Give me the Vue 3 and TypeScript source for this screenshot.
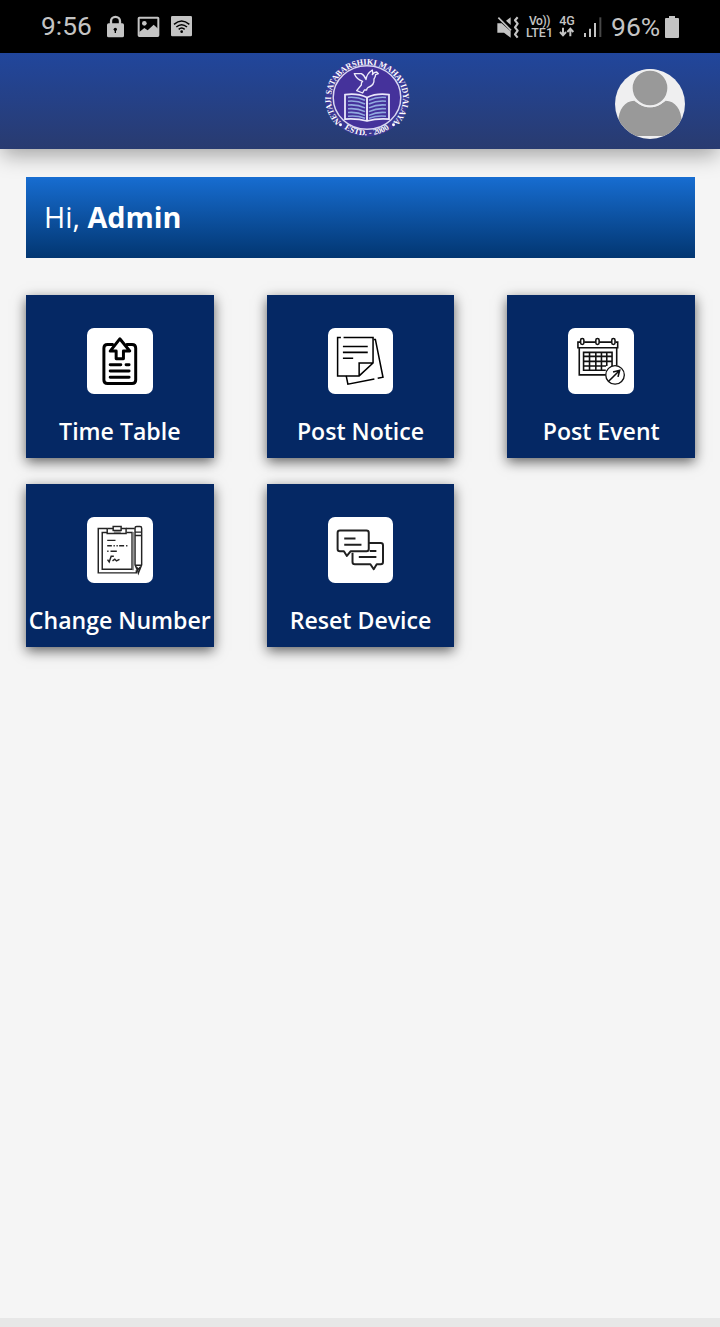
<script setup lang="ts">
interface Tile {
  label: string
  icon: 'timetable' | 'notice' | 'event' | 'number' | 'device'
  view: string
}

const tiles: Tile[] = [
  { label: 'Time Table', icon: 'timetable', view: '21 24 198 198' },
  { label: 'Post Notice', icon: 'notice', view: '24 24 198 198' },
  { label: 'Post Event', icon: 'event', view: '24 24 198 198' },
  { label: 'Change Number', icon: 'number', view: '21 21 198 198' },
  { label: 'Reset Device', icon: 'device', view: '24 21 198 198' },
]
</script>

<template>
  <div class="screen">
    <div class="status">
      <span class="clock">9:56</span>
      <svg class="left-icons" viewBox="225 0 270 159" width="90" height="53">
        <path d="M243 72V64a13 13 0 0 1 27 0v8" fill="none" stroke="#c4c4c4" stroke-width="7" />
        <rect x="231" y="70" width="51" height="42" rx="5" fill="#c4c4c4" />
        <circle cx="256" cy="88" r="5" fill="#000" />
        <path d="M256 88v11" stroke="#000" stroke-width="4" />
        <rect x="326" y="53" width="59" height="55" rx="2" fill="none" stroke="#c4c4c4" stroke-width="6" />
        <circle cx="343" cy="70" r="7" fill="#c4c4c4" />
        <path d="M328 96l15-12 10 7 18-17 14 13v20h-57z" fill="#c4c4c4" />
        <rect x="423" y="48" width="63" height="61" rx="4" fill="#c4c4c4" />
        <g fill="none" stroke="#000" stroke-width="4.5">
          <path d="M432 73q23-20 46 0M439 81q16-14 32 0M446 88q9-8 18 0" />
        </g>
        <circle cx="455" cy="95" r="4" fill="#000" />
      </svg>
      <div class="right">
        <svg class="mute" viewBox="45 39 75 78" width="25" height="26">
          <path d="M49 67h13l27 24v19L69 95H49zM75 59l14-10v23z" fill="#c4c4c4" />
          <path d="M52 50l38 38" stroke="#c4c4c4" stroke-width="5" />
          <path d="M110 49l-8 9 8 10-8 11 8 10-8 11 8 10" fill="none" stroke="#c4c4c4" stroke-width="6.5" stroke-linejoin="round" />
        </svg>
        <div class="mini lte"><span class="vo">Vo))</span><span>LTE1</span></div>
        <div class="mini net">
          <span>4G</span>
          <svg viewBox="236 85 48 32" width="16" height="10.7">
            <path d="M248 87v22m-9-9 9 10 9-10M270 113V91m-9 9 9-10 9 10" fill="none" stroke="#c4c4c4" stroke-width="6" />
          </svg>
        </div>
        <svg class="signal" viewBox="310 48 60 66" width="20" height="22">
          <path d="M316 99v12M331 86v25M346 69v42" stroke="#c4c4c4" stroke-width="6" />
          <path d="M362 52v59" stroke="#484848" stroke-width="6" />
        </svg>
        <span class="percent">96%</span>
        <svg class="battery" viewBox="0 0 14 22" width="14" height="22">
          <path d="M4 0h6v2h3q1 0 1 1v18q0 1-1 1H1q-1 0-1-1V3q0-1 1-1h3z" fill="#c4c4c4" />
        </svg>
      </div>
    </div>

    <header class="header">
      <svg class="logo" viewBox="0 0 84 84" width="84" height="79" preserveAspectRatio="none">
        <defs>
          <path id="ring-main" d="M16 68A36 36 0 1 1 68 68" />
          <path id="ring-foot" d="M17.5 74A40.5 40.5 0 0 0 66.5 74" />
        </defs>
        <circle cx="42" cy="42" r="41.5" fill="#42389b" opacity=".8" />
        <circle cx="42" cy="42" r="33.8" fill="#45329b" stroke="#d9d6f2" stroke-width="1.5" />
        <text class="ring"><textPath href="#ring-main" textLength="168" lengthAdjust="spacingAndGlyphs">NETAJI SATABARSHIKI MAHAVIDYALAYA</textPath></text>
        <text class="ring"><textPath href="#ring-foot" startOffset="2" textLength="48" lengthAdjust="spacingAndGlyphs">ESTD. - 2000</textPath></text>
        <circle cx="15.5" cy="71" r="1.5" fill="#fff" />
        <circle cx="68.5" cy="71" r="1.5" fill="#fff" />
        <path d="M118 71l21 0q10 5 14 18 2-18 19-29 2 8 0 14 5-8 13-8l5 5-8 3q-1 8-5 13 2 18-17 25-5 4-5 8l-7 0-5 9-18-7 14-17q-1-7 4-11-18-6-25-23z" transform="scale(.3333 .3544) translate(-30 -24)" fill="#4a3aa2" stroke="#eeecfa" stroke-width="4" stroke-linejoin="round" />
        <path d="M20 39q12-2 22 3 10-5 22-3v26q-12-1-22 2-10-3-22-2z" fill="#45329b" stroke="#e9e7fa" stroke-width="1.8" />
        <path d="M42 42v25" stroke="#eeecfa" stroke-width="1.9" />
        <path d="M23 42q9-1 17 3M23 46q9-1 17 3M23 50q9-1 17 3M23 54q9-1 17 3M23 58q9-1 17 3M23 62q9-1 17 2M44 45q8-4 17-3M44 49q8-4 17-3M44 53q8-4 17-3M44 57q8-4 17-3M44 61q8-4 17-3M44 64q8-3 17-2" fill="none" stroke="#91a9df" stroke-width="1.7" />
      </svg>
      <svg class="avatar" viewBox="45 42 210 210" width="70" height="70">
        <defs><clipPath id="face"><circle cx="150" cy="147" r="105" /></clipPath></defs>
        <g clip-path="url(#face)">
          <rect x="45" y="42" width="210" height="210" fill="#efeff0" />
          <path d="M55 243v-42c0-38 20-64 48-64 12 9 27 20 47 20s35-11 47-20c28 0 48 26 48 64v42z" fill="#999" />
          <circle cx="150" cy="99" r="55" fill="#999" stroke="#efeff0" stroke-width="6" />
        </g>
      </svg>
    </header>

    <main class="content">
      <div class="greeting">Hi,&nbsp;<b>Admin</b></div>
      <div class="tiles">
        <div v-for="tile in tiles" :key="tile.label" class="tile">
          <svg class="tile-icon" :viewBox="tile.view">
            <g v-if="tile.icon === 'timetable'" fill="none" stroke="#000" stroke-width="9" stroke-linecap="round" stroke-linejoin="round">
              <path d="M98 73H83q-11 0-11 11v96q0 11 11 11h74q11 0 11-11V84q0-11-11-11h-15" />
              <path d="M120 56L91 93h18v23h22V93h19z" fill="#fff" />
              <path d="M91 134h32M139 134h9M91 153h57M91 172h57" />
            </g>
            <g v-else-if="tile.icon === 'notice'" fill="none" stroke="#000" stroke-width="4.6">
              <path d="M63 52H53v116h65l42-39V52H71M160 129h-42v39M69 79h75M69 97h75M69 115h31" />
              <path d="M162 58h5l23 114-16 3M164 177l-80 16-5-25" />
            </g>
            <g v-else-if="tile.icon === 'event'" fill="none" stroke="#111" stroke-width="4.8">
              <path d="M61 66h-7v17h120V66h-6M73 66h34M119 66h36M58 83v82h80M171 83v54" />
              <rect x="62" y="55" width="10" height="18" rx="5" />
              <rect x="108" y="55" width="10" height="18" rx="5" />
              <rect x="156" y="55" width="10" height="18" rx="5" />
              <path d="M138 151H71V97h86v41M71 109h86M71 124h86M71 138h68M89 97v54M108 97v54M125 97v54M141 97v41" />
              <circle cx="166" cy="165" r="28" fill="#fff" stroke-width="4" />
              <path d="M146 185l32-32M160 156l20-5-5 20" />
            </g>
            <g v-else-if="tile.icon === 'number'" fill="none" stroke="#242424" stroke-width="4.4">
              <path d="M82 55H55v134h115v-8M139 55h26" />
              <path d="M82 67H67v111h90V67h-17" />
              <path d="M160 66v115" stroke="#777" />
              <path d="M82 55v15h57V55h-15M82 55h18" />
              <rect x="100" y="49" width="24" height="12" />
              <path d="M102 66h21" stroke="#777" stroke-width="5" />
              <path d="M166 165V54q0-5 5-5h10q5 0 5 5v111l-8 20-2 5-2-7zM166 66h20M166 76h20M166 166h20M170 171l6 7 6-7" />
              <path d="M82 91h25M82 107h14M101 107h4M110 107h4M118 107h15M139 107h4M82 124h4M92 124h19M83 149l5 7 6-17h8M98 153l7-5 5 5 9-5" />
            </g>
            <g v-else fill="none" stroke="#202020" stroke-width="6" stroke-linejoin="round">
              <path d="M98 128v28q0 7 7 7h47l10 15 9-15h12q7 0 7-7v-50q0-7-7-7h-36" />
              <path d="M60 61h80q7 0 7 7v49q0 7-7 7H92l-11 14-9-14H60q-7 0-7-7V68q0-7 7-7z" fill="#fff" />
              <path d="M73 85h34M73 104h52M150 123h20M117 141h53" />
            </g>
          </svg>
          <span class="tile-label">{{ tile.label }}</span>
        </div>
      </div>
    </main>
    <div class="bottom-edge"></div>
  </div>
</template>

<style>
body {
  margin: 0;
  background: #f5f5f5;
}
</style>

<style scoped>
.screen {
  width: 720px;
  height: 1327px;
  display: flex;
  flex-direction: column;
  overflow: hidden;
  background: #f5f5f5;
  font-family: "Open Sans", sans-serif;
}
svg {
  display: block;
  flex: none;
}
.status {
  height: 53px;
  flex: none;
  display: flex;
  align-items: center;
  box-sizing: border-box;
  padding: 0 41px 0 41px;
  background: #000;
  color: #c4c4c4;
  font-family: Roboto, sans-serif;
}
.clock {
  width: 64px;
  font-size: 26.3px;
  line-height: 53px;
}
.right {
  margin-left: auto;
  display: flex;
  align-items: center;
}
.mute {
  margin-right: 1px;
}
.mini {
  display: flex;
  flex-direction: column;
  align-items: center;
  font-size: 12.5px;
  line-height: 12px;
  font-weight: 500;
}
.lte {
  width: 27px;
  margin-left: 4px;
}
.vo {
  font-size: 12px;
  letter-spacing: -0.4px;
}
.net {
  width: 16px;
  margin-left: 6px;
}
.signal {
  margin-left: 8px;
}
.percent {
  width: 49px;
  margin-left: 8px;
  font-size: 26.5px;
  line-height: 53px;
}
.battery {
  margin-left: 5px;
}
.header {
  height: 96px;
  flex: none;
  box-sizing: border-box;
  display: flex;
  align-items: flex-start;
  padding: 5px 35px 0 325px;
  background: linear-gradient(#21469c, #293b70);
  box-shadow: 0 8px 20px -2px rgba(0, 0, 0, 0.34);
}
.logo {
  overflow: visible;
}
.ring {
  fill: #fff;
  font-family: "Liberation Serif", serif;
  font-size: 8.8px;
  font-weight: 700;
}
.avatar {
  margin: 11px 0 0 auto;
}
.content {
  flex: 1;
  padding: 28px 25px 0 26px;
}
.greeting {
  height: 81px;
  box-sizing: border-box;
  padding: 0 0 2px 18px;
  display: flex;
  align-items: center;
  background: linear-gradient(#176dd1, #023671);
  color: #fff;
  font-size: 28.8px;
  font-weight: 400;
  line-height: 79px;
}
.greeting b {
  font-weight: 700;
}
.tiles {
  display: grid;
  grid-template-columns: repeat(3, 187.6px);
  justify-content: space-between;
  grid-auto-rows: 163px;
  row-gap: 26px;
  margin-top: 37px;
}
.tile {
  display: flex;
  flex-direction: column;
  align-items: center;
  box-sizing: border-box;
  padding-top: 33px;
  background: #052864;
  box-shadow: 0 4px 12px rgba(0, 0, 0, 0.6);
}
.tile-icon {
  width: 65.6px;
  height: 66px;
  border-radius: 7px;
  background: #fff;
}
.tile-label {
  margin-top: 21px;
  color: #fff;
  font-size: 23.1px;
  font-weight: 600;
  line-height: 32px;
  white-space: nowrap;
}
.bottom-edge {
  height: 9px;
  flex: none;
  background: #e7e7e7;
}
</style>
